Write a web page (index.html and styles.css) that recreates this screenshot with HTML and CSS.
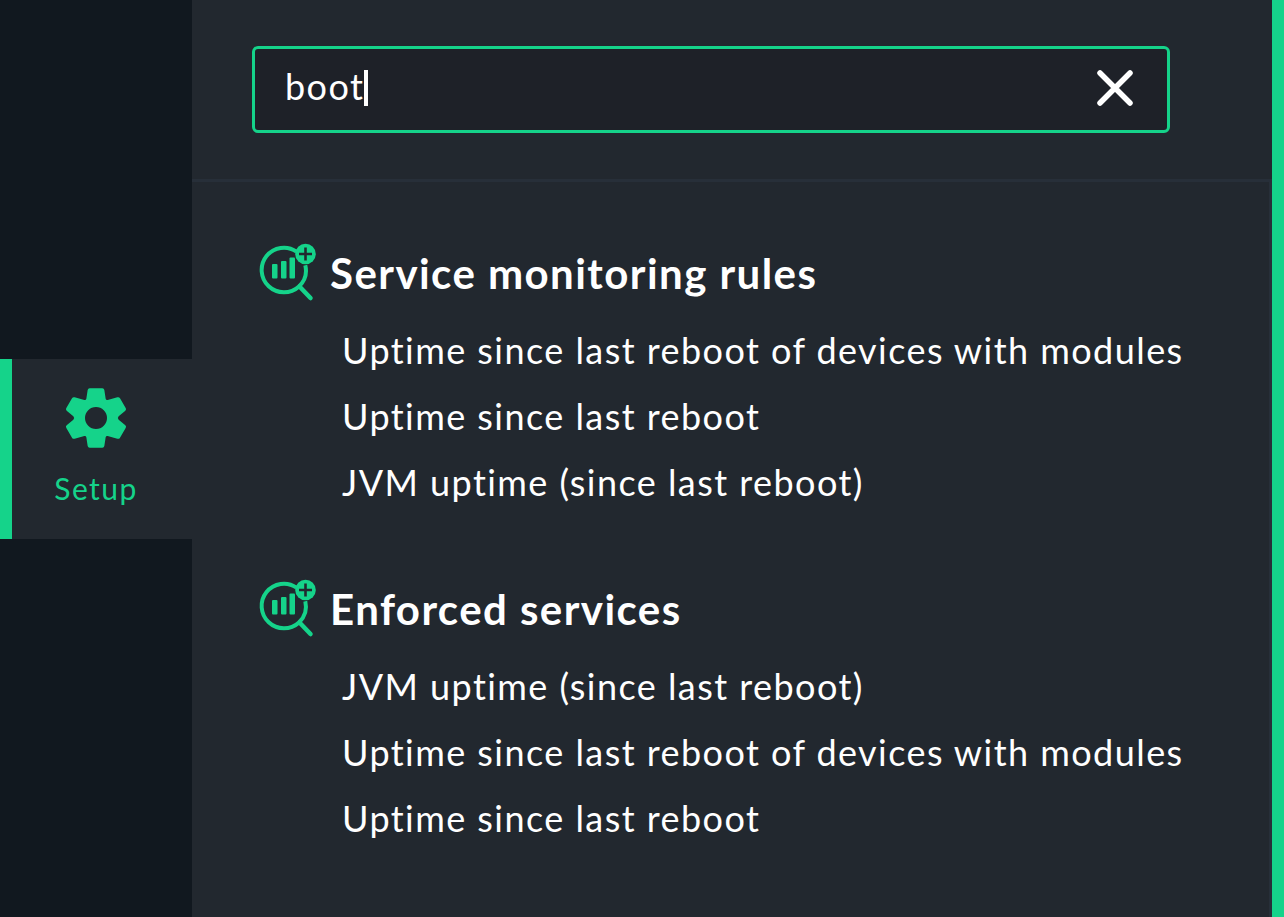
FILE: index.html
```html
<!DOCTYPE html>
<html lang="en">
<head>
<meta charset="utf-8">
<title>Setup</title>
<link rel="stylesheet" href="styles.css">
</head>
<body>
<svg class="symbols" aria-hidden="true">
  <symbol id="monitor" viewBox="-1 0 60 60">
    <path d="M37.500 8.600A22.300 22.300 0 1 0 40 43.500A22.300 22.300 0 0 0 46.300 22.300" fill="none" stroke="currentColor" stroke-width="4"/>
    <path d="M40.500 43.500 51.500 55" fill="none" stroke="currentColor" stroke-width="4.500" stroke-linecap="round"/>
    <rect x="13" y="21" width="5.500" height="14.500" rx="1" fill="currentColor"/>
    <rect x="22" y="18" width="5.500" height="17.500" rx="1" fill="currentColor"/>
    <rect x="30.500" y="14.500" width="5.500" height="21" rx="1" fill="currentColor"/>
    <circle cx="46.500" cy="11" r="10.300" fill="currentColor"/>
    <path d="M46.500 4.500v13M40 11h13" class="cut" stroke-width="2.600"/>
  </symbol>
</svg>
<div class="app">
  <nav class="sidebar">
    <a class="tab" href="#setup">
      <svg class="gear" viewBox="-93 -93 186 186" aria-hidden="true"><path fill="currentColor" fill-rule="evenodd" d="M-19-89H19Q24-89 25-84L29-58Q30-53 35-54L64-62Q69-64 72-59L89-30Q92-26 88-22L68-5Q63 0 68 5L88 22Q92 26 89 30L72 59Q69 64 64 62L35 54Q30 53 29 58L25 84Q24 89 19 89H-19Q-24 89-25 84L-29 58Q-30 53-35 54L-64 62Q-69 64-72 59L-89 30Q-92 26-88 22L-68 5Q-63 0-68-5L-88-22Q-92-26-89-30L-72-59Q-69-64-64-62L-35-54Q-30-53-29-58L-25-84Q-24-89-19-89ZM0-33A33 33 0 1 0 0 33A33 33 0 1 0 0-33Z"/></svg>
      <span>Setup</span>
    </a>
  </nav>
  <main class="panel">
    <header class="search-area">
      <form class="search">
        <input class="query" type="text" value="boot" aria-label="Search setup" autocomplete="off" spellcheck="false">
        <span class="caret"></span>
        <button class="clear" type="button" aria-label="Clear search">
          <svg viewBox="0 0 36 36" aria-hidden="true"><path d="M3 3 33 33M33 3 3 33" fill="none" stroke="currentColor" stroke-width="5.500" stroke-linecap="round"/></svg>
        </button>
      </form>
    </header>
    <div class="results">
      <section class="topic">
        <h2><svg class="icon" aria-hidden="true"><use href="#monitor"/></svg>Service monitoring rules</h2>
        <ul>
          <li><a href="#uptime-modules">Uptime since last reboot of devices with modules</a></li>
          <li><a href="#uptime">Uptime since last reboot</a></li>
          <li><a href="#jvm">JVM uptime (since last reboot)</a></li>
        </ul>
      </section>
      <section class="topic">
        <h2><svg class="icon" aria-hidden="true"><use href="#monitor"/></svg>Enforced services</h2>
        <ul>
          <li><a href="#enforced-jvm">JVM uptime (since last reboot)</a></li>
          <li><a href="#enforced-uptime-modules">Uptime since last reboot of devices with modules</a></li>
          <li><a href="#enforced-uptime">Uptime since last reboot</a></li>
        </ul>
      </section>
    </div>
  </main>
</div>
</body>
</html>
```
FILE: styles.css
```css
:root {
  --green: #15d38a;
  --panel: #22282f;
  --line: #272f39;
}

* {
  box-sizing: border-box;
}

body {
  margin: 0;
  background: var(--panel);
  color: #fff;
  font-family: Lato, sans-serif;
  font-size: 36px;
  letter-spacing: 0.04em;
}

.symbols {
  position: absolute;
  width: 0;
  height: 0;
}

.app {
  display: flex;
  min-height: 100vh;
}

.sidebar {
  flex: 0 0 192px;
  display: flex;
  flex-direction: column;
  justify-content: center;
  padding-bottom: 20px;
  background: #11181f;
}

.tab {
  display: flex;
  flex-direction: column;
  align-items: center;
  gap: 19px;
  height: 180px;
  padding: 28px 12px 0 0;
  border-left: 12px solid var(--green);
  background: var(--panel);
  color: var(--green);
  font-size: 30px;
  line-height: 40px;
  text-decoration: none;
}

.gear {
  width: 62px;
  height: 62px;
}

.panel {
  flex: 1;
  display: flex;
  flex-direction: column;
  min-width: 0;
  border-right: 12px solid var(--green);
}

.search-area {
  padding: 46px 102px 46px 60px;
  border-bottom: 3px solid var(--line);
}

.search {
  display: flex;
  align-items: center;
  height: 87px;
  padding: 0 34px 3px 30px;
  border: 3px solid var(--green);
  border-radius: 6px;
  background: #1e2128;
}

.query {
  field-sizing: content;
  padding: 0 0 4px;
  border: 0;
  outline: 0;
  background: none;
  color: inherit;
  font: inherit;
  letter-spacing: inherit;
}

.caret {
  width: 4px;
  height: 36px;
  background: #fff;
}

.clear {
  width: 36px;
  height: 36px;
  margin-left: auto;
  padding: 0;
  border: 0;
  background: none;
  color: #fff;
}

.clear svg {
  display: block;
}

.results {
  flex: 1;
  padding: 61px 60px 48px 66px;
  border-right: 3px solid var(--line);
}

.topic + .topic {
  margin-top: 64px;
}

.topic h2 {
  display: flex;
  align-items: center;
  gap: 12px;
  height: 60px;
  margin: 0 0 14px;
  font-size: 42px;
  line-height: 60px;
}

.icon {
  width: 60px;
  height: 60px;
  color: var(--green);
}

.cut {
  stroke: var(--panel);
}

.topic ul {
  margin: 0;
  padding: 0 0 0 84px;
  list-style: none;
}

.topic li {
  line-height: 66px;
}

.topic a {
  color: inherit;
  text-decoration: none;
  white-space: nowrap;
}
```
